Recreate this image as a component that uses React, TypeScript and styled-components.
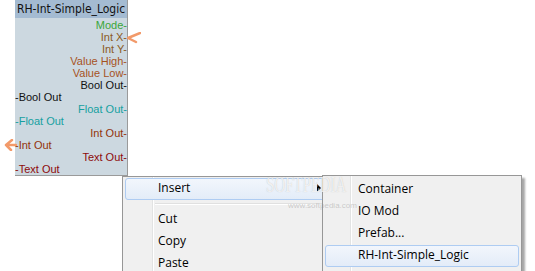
import styled, { createGlobalStyle } from "styled-components"

const Global = createGlobalStyle`
  html, body {
    margin: 0;
    padding: 0;
    background: #fff;
  }
  #root {
    width: 535px;
    height: 271px;
  }
`

const Canvas = styled.div`
  position: relative;
  width: 535px;
  height: 271px;
  overflow: hidden;
  background: #fff;
  font-family: "Liberation Sans", Arial, sans-serif;
`

const Node = styled.div`
  position: absolute;
  left: 15px;
  top: 0;
  width: 112px;
  height: 175px;
  background: #ccd8e0;
  border-right: 1px solid #9a9a9a;
  border-bottom: 1px solid #9a9a9a;
  display: flex;
  flex-direction: column;
`

const NodeTitle = styled.div`
  height: 18px;
  background: #a4bbd2;
  color: #111;
  font-family: "DejaVu Sans Condensed", "DejaVu Sans", sans-serif;
  font-size: 12px;
  line-height: 18px;
  padding-left: 2px;
  white-space: nowrap;
  overflow: hidden;
`

const Ports = styled.div`
  display: flex;
  flex-direction: column;
  padding-top: 1px;
`

const Port = styled.div<{ $side: "in" | "out"; $color: string }>`
  height: 12px;
  line-height: 12px;
  font-size: 11px;
  color: ${(p) => p.$color};
  text-align: ${(p) => (p.$side === "out" ? "right" : "left")};
  white-space: nowrap;
`

const Wire = styled.svg`
  position: absolute;
`

const Menu = styled.div<{ $left: number; $top: number; $width: number; $padTop: number }>`
  position: absolute;
  left: ${(p) => p.$left}px;
  top: ${(p) => p.$top}px;
  width: ${(p) => p.$width}px;
  height: 120px;
  box-sizing: border-box;
  background: #f0f0f0;
  border: 1px solid #979797;
  box-shadow: 3px 3px 2px rgba(0, 0, 0, 0.35);
  padding: ${(p) => p.$padTop}px 2px 2px;
  display: flex;
  flex-direction: column;
  font-family: "Open Sans", "Noto Sans", sans-serif;
  font-size: 12px;
  color: #000;
`

const Gutter = styled.div<{ $x: number }>`
  position: absolute;
  top: 0;
  bottom: 0;
  left: ${(p) => p.$x}px;
  width: 1px;
  background: #e2e3e3;
  border-right: 1px solid #fff;
`

const Item = styled.div<{ $active?: boolean }>`
  position: relative;
  height: 22px;
  box-sizing: border-box;
  padding: 0 5px 2px 32px;
  border: 1px solid ${(p) => (p.$active ? "#aeccf2" : "transparent")};
  border-radius: 3px;
  background: ${(p) =>
    p.$active ? "linear-gradient(#f2f6fc, #e3ecf8)" : "transparent"};
  display: flex;
  align-items: center;
  justify-content: space-between;
  line-height: 16px;
`

const Separator = styled.div`
  margin: 3px 0 4px 30px;
  height: 1px;
  background: #e0e0e0;
  border-bottom: 1px solid #fff;
`

const Arrow = styled.span`
  width: 0;
  height: 0;
  border-top: 4px solid transparent;
  border-bottom: 4px solid transparent;
  border-left: 4px solid #000;
`

const Watermark = styled.div`
  position: absolute;
  left: 266px;
  top: 171px;
  z-index: 2;
  color: rgba(255, 255, 255, 0.75);
  text-shadow: 0 0 1px rgba(150, 150, 150, 0.55);
  font-family: "Liberation Serif", serif;
  font-size: 24px;
  transform: scaleX(0.62);
  transform-origin: left top;
  pointer-events: none;
`

const WatermarkUrl = styled.div`
  position: absolute;
  left: 288px;
  top: 201px;
  z-index: 2;
  color: rgba(150, 150, 150, 0.45);
  font-family: "Liberation Sans", sans-serif;
  font-size: 8px;
  pointer-events: none;
`

const ports: { side: "in" | "out"; label: string; color: string }[] = [
  { side: "out", label: "Mode-", color: "#3aa63a" },
  { side: "out", label: "Int X-", color: "#8a5a1e" },
  { side: "out", label: "Int Y-", color: "#8a5a1e" },
  { side: "out", label: "Value High-", color: "#a6521e" },
  { side: "out", label: "Value Low-", color: "#a6521e" },
  { side: "out", label: "Bool Out-", color: "#111" },
  { side: "in", label: "-Bool Out", color: "#111" },
  { side: "out", label: "Float Out-", color: "#16a0a0" },
  { side: "in", label: "-Float Out", color: "#16a0a0" },
  { side: "out", label: "Int Out-", color: "#93330a" },
  { side: "in", label: "-Int Out", color: "#93330a" },
  { side: "out", label: "Text Out-", color: "#8e0a0a" },
  { side: "in", label: "-Text Out", color: "#8e0a0a" },
]

export default function App() {
  return (
    <Canvas>
      <Global />
      <Node>
        <NodeTitle>RH-Int-Simple_Logic</NodeTitle>
        <Ports>
          {ports.map((p) => (
            <Port key={p.label + p.side} $side={p.side} $color={p.color}>
              {p.label}
            </Port>
          ))}
        </Ports>
      </Node>

      <Wire width="14" height="12" style={{ left: 127, top: 32 }} viewBox="0 0 14 12">
        <path d="M1 6 L13 1 M1 6 L9 10" stroke="#f29a6a" strokeWidth="2.5" fill="none" strokeLinecap="round" />
      </Wire>
      <Wire width="14" height="12" style={{ left: 3, top: 139 }} viewBox="0 0 14 12">
        <path d="M13 6 L3 6 M3 6 L9 1 M3 6 L8 11" stroke="#f29a6a" strokeWidth="2.5" fill="none" strokeLinecap="round" />
      </Wire>

      <Menu $left={122} $top={176} $width={208} $padTop={1}>
        <Gutter $x={29} />
        <Item $active>
          Insert
          <Arrow />
        </Item>
        <Separator />
        <Item>Cut</Item>
        <Item>Copy</Item>
        <Item>Paste</Item>
      </Menu>

      <Menu $left={322} $top={175} $width={200} $padTop={3}>
        <Gutter $x={27} />
        <Item>Container</Item>
        <Item>IO Mod</Item>
        <Item>Prefab...</Item>
        <Item $active>RH-Int-Simple_Logic</Item>
      </Menu>

      <Watermark>SOFTPEDIA</Watermark>
      <WatermarkUrl>www.softpedia.com</WatermarkUrl>
    </Canvas>
  )
}
